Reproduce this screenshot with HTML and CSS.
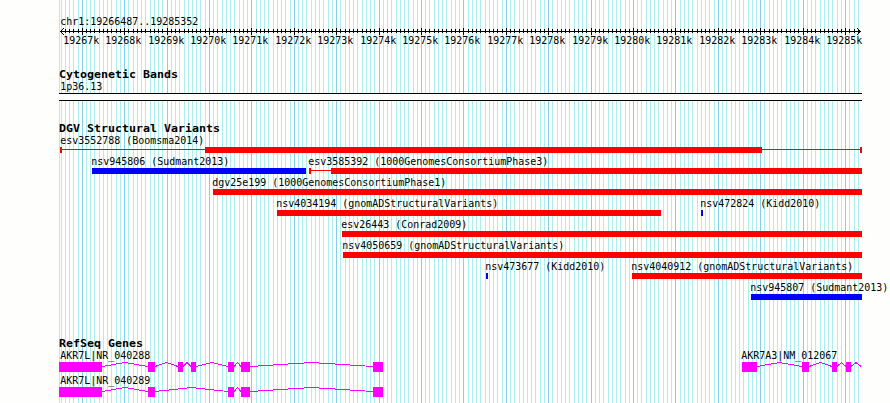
FILE: index.html
```html
<!DOCTYPE html>
<html>
<head>
    <meta charset="utf-8">
    <title>chr1:19266487..19285352</title>
    <link rel="stylesheet" href="styles.css">
</head>
<body>

<svg id="panel" class="panel" width="890" height="403"></svg>

<script type="text/javascript" src="panel.js"></script>

</body>
</html>
```

FILE: styles.css
```css
body, html {
    margin: 0;
    padding: 0;
    background: #fefffc;
}

.panel {
    display: block;
    shape-rendering: crispEdges;
}

/* grid and ruler */
.grid-minor {
    fill: #afeeee;
}
.grid-major {
    fill: #87ceeb;
}
.ruler {
    fill: #000;
}
.arrow {
    fill: none;
    stroke: #000;
}
.band {
    fill: #fefffc;
}

/* texts */
.label {
    font: 11px "DejaVu Sans Mono", monospace;
    fill: #000;
}
.heading {
    font: bold 11px "DejaVu Sans Mono", monospace;
    fill: #000;
}

/* features */
.gain {
    fill: #0000ff;
}
.loss {
    fill: #ff0000;
}
.exon {
    fill: #ff00ff;
}
.intron {
    fill: none;
    stroke: #ff00ff;
}
```

FILE: panel.js
```javascript
var panel = document.getElementById('panel');

var start = 19266487;
var end = 19285352;
var left = 59;
var right = 862;
var scale = 800 / (end - start + 1);

function add(name, cls, attrs) {
    var el = document.createElementNS('http://www.w3.org/2000/svg', name);
    el.setAttribute('class', cls);
    for (var key in attrs) {
        el.setAttribute(key, attrs[key]);
    }
    panel.appendChild(el);
    return el;
}

function rect(cls, x1, y, x2, height) {
    add('rect', cls, {x: x1, y: y, width: x2 - x1, height: height});
}

// every character takes a cell of fixed width
function text(cls, x, y, str, cell) {
    var el = add('text', cls, {
        x: x,
        y: y,
        textLength: str.length * cell,
        lengthAdjust: 'spacingAndGlyphs'
    });
    el.textContent = str;
}

function label(x, y, str) {
    text('label', x + 0.3, y, str, 6);
}

function heading(y, str) {
    text('heading', left, y, str, 7);
}

function toX(bp) {
    return Math.round(60 + (bp - start) * scale);
}

// grid
var bp;
rect('grid-minor', left, 0, left + 1, 403);
for (bp = 19266500; bp <= 19285300; bp += 100) {
    rect(bp % 1000 ? 'grid-minor' : 'grid-major', toX(bp), 0, toX(bp) + 1, 403);
}

// ruler
label(60, 25, 'chr1:19266487..19285352');
rect('ruler', 60, 31, 861, 1);
for (bp = 19266600; bp <= 19285300; bp += 100) {
    var x = toX(bp);
    if (bp % 1000) {
        rect('ruler', x, 29, x + 1, 4);
    }
    else {
        rect('ruler', x, 28, x + 1, 7);
        label(x - 19, 44, bp / 1000 + 'k');
    }
}
add('path', 'arrow', {d: 'M64 28 L60.5 31.5 L64 35'});
add('path', 'arrow', {d: 'M857 28 L860.5 31.5 L857 35'});

// cytogenetic bands
heading(78, 'Cytogenetic Bands');
label(60, 90, '1p36.13');
rect('band', left, 93, right, 8);
rect('ruler', left, 93, right, 1);
rect('ruler', left, 100, right, 1);

// structural variants: row, type, from, to, name
heading(132, 'DGV Structural Variants');
var variants = [
    [0, 'loss', 205, 762, 'esv3552788 (Boomsma2014)', 60],
    [1, 'gain', 92, 306, 'nsv945806 (Sudmant2013)'],
    [1, 'loss', 331, 862, 'esv3585392 (1000GenomesConsortiumPhase3)', 308],
    [2, 'loss', 213, 862, 'dgv25e199 (1000GenomesConsortiumPhase1)'],
    [3, 'loss', 277, 661, 'nsv4034194 (gnomADStructuralVariants)'],
    [3, 'gain', 701, 703, 'nsv472824 (Kidd2010)'],
    [4, 'loss', 342, 862, 'esv26443 (Conrad2009)'],
    [5, 'loss', 343, 862, 'nsv4050659 (gnomADStructuralVariants)'],
    [6, 'gain', 486, 488, 'nsv473677 (Kidd2010)'],
    [6, 'loss', 632, 862, 'nsv4040912 (gnomADStructuralVariants)'],
    [7, 'gain', 751, 862, 'nsv945807 (Sudmant2013)']
];
variants.forEach(function (v) {
    var y = 147 + v[0] * 21;
    rect(v[1], v[2], y, v[3], 6);
    label(v[5] || v[2] - 1, y - 3, v[4]);
});

// outer ranges
rect('loss', 60, 147, 62, 6);
rect('loss', 62, 149, 205, 1);
rect('loss', 762, 149, 860, 1);
rect('loss', 860, 147, 862, 6);
rect('loss', 309, 168, 311, 6);
rect('loss', 311, 170, 331, 1);

// genes
function gene(x, y, name, exons, last) {
    label(x, y - 3, name);
    exons.forEach(function (exon, i) {
        var next = exons[i + 1] ? exons[i + 1][0] : last;
        rect('exon', exon[0], y, exon[1], 10);
        if (next) {
            var mid = (exon[1] + next) / 2;
            add('path', 'intron', {
                d: 'M' + exon[1] + ' ' + (y + 4.5) +
                    ' L' + mid + ' ' + (y + 0.5) +
                    ' L' + next + ' ' + (y + 4.5)
            });
        }
    });
}

heading(347, 'RefSeq Genes');
gene(60, 362, 'AKR7L|NR_040288', [[59, 102], [148, 155], [178, 183], [191, 196], [228, 234], [241, 250], [373, 383]]);
gene(60, 387, 'AKR7L|NR_040289', [[59, 102], [148, 155], [228, 234], [241, 250], [373, 383]]);
gene(741, 362, 'AKR7A3|NM_012067', [[742, 757], [802, 809], [832, 837], [846, 851]], 861);
```
